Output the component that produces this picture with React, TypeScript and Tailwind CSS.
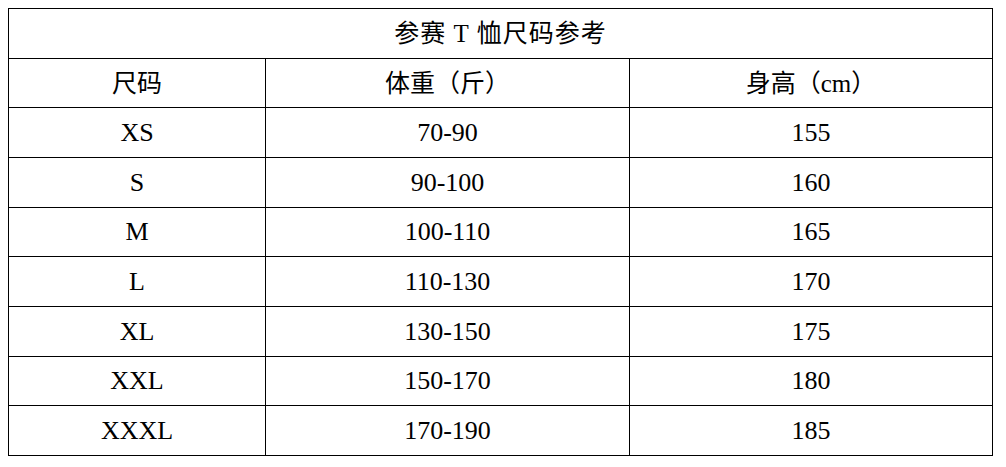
const rows = [
  { size: 'XS', weight: '70-90', height: '155', h: 'h-[50px]' },
  { size: 'S', weight: '90-100', height: '160', h: 'h-[50px]' },
  { size: 'M', weight: '100-110', height: '165', h: 'h-[49px]' },
  { size: 'L', weight: '110-130', height: '170', h: 'h-[50px]' },
  { size: 'XL', weight: '130-150', height: '175', h: 'h-[50px]' },
  { size: 'XXL', weight: '150-170', height: '180', h: 'h-[49px]' },
  { size: 'XXXL', weight: '170-190', height: '185', h: 'h-[50px]' },
];

function Cell({ children, w }: { children: React.ReactNode; w: string }) {
  return (
    <div className={`${w} flex items-center justify-center border-r border-b border-black`}>
      {children}
    </div>
  );
}

export default function App() {
  return (
    <div className="min-h-screen w-[1006px] h-[467px] bg-white pt-2 pl-2 font-['Liberation_Serif','Noto_Sans_CJK_SC',serif] text-[25px] leading-none text-black">
      <div className="w-[985px] border-l border-t border-black">
        <div className="h-[50px] flex items-center justify-center border-r border-b border-black tracking-[1px]">
          参赛 T 恤尺码参考
        </div>
        <div className="flex h-[49px]">
          <Cell w="w-[257px]">尺码</Cell>
          <Cell w="w-[364px]">体重（斤）</Cell>
          <Cell w="w-[363px]">身高（cm）</Cell>
        </div>
        {rows.map((r) => (
          <div key={r.size} className={`flex ${r.h} text-[26px]`}>
            <Cell w="w-[257px]">{r.size}</Cell>
            <Cell w="w-[364px]">{r.weight}</Cell>
            <Cell w="w-[363px]">{r.height}</Cell>
          </div>
        ))}
      </div>
    </div>
  );
}
